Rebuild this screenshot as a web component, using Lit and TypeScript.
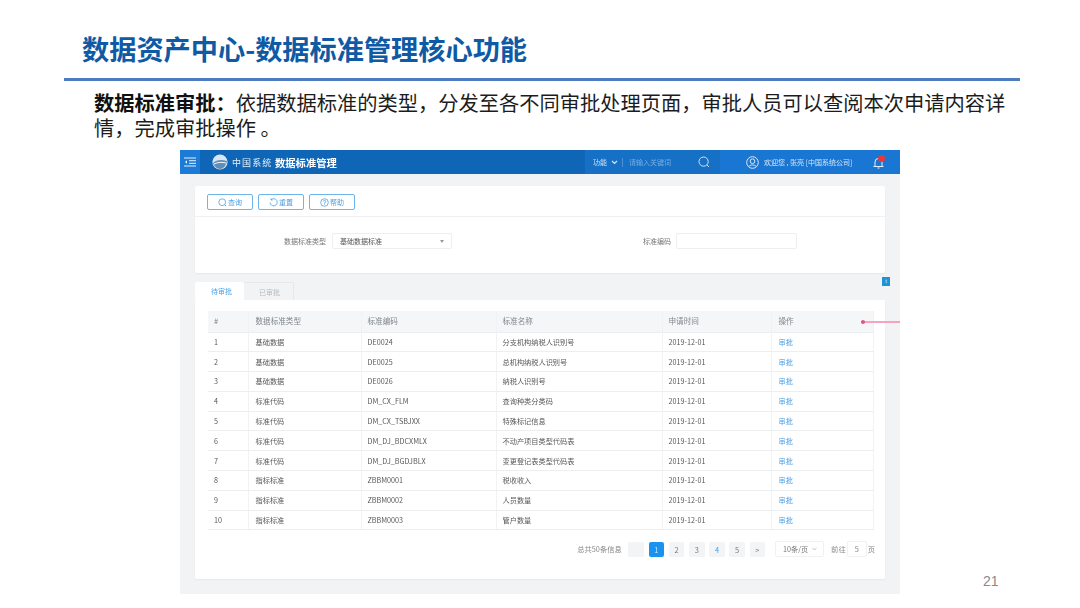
import { LitElement, html, css } from "lit";
import { customElement } from "lit/decorators.js";

const ROWS = [
  ["1", "基础数据", "DE0024", "分支机构纳税人识别号"],
  ["2", "基础数据", "DE0025", "总机构纳税人识别号"],
  ["3", "基础数据", "DE0026", "纳税人识别号"],
  ["4", "标准代码", "DM_CX_FLM", "查询种类分类码"],
  ["5", "标准代码", "DM_CX_TSBJXX", "特殊标记信息"],
  ["6", "标准代码", "DM_DJ_BDCXMLX", "不动产项目类型代码表"],
  ["7", "标准代码", "DM_DJ_BGDJBLX", "变更登记表类型代码表"],
  ["8", "指标标准", "ZBBM0001", "税收收入"],
  ["9", "指标标准", "ZBBM0002", "人员数量"],
  ["10", "指标标准", "ZBBM0003", "管户数量"],
];

@customElement("app-root")
export class AppRoot extends LitElement {
  static styles = css`
    :host {
      display: block; position: relative; width: 1080px; height: 608px; overflow: hidden;
      background: #fff; font-family: "Noto Sans CJK SC", "Liberation Sans", sans-serif;
    }
    .title { margin: 0; padding: 30px 0 0 82px; height: 48px; line-height: 36px; font-size: 27.2px; font-weight: 700; color: #0f5aa4; box-sizing: content-box; }
    .rule { margin-left: 64px; width: 956px; height: 3px; background: #4f7cc0; }
    .lead { margin: 9px 0 0 94px; width: 925px; font-size: 20.25px; line-height: 25px; color: #1c1c1c; height: 60px; }
    .lead b { font-weight: 700; color: #111; }
    .shot {
      margin: 0 0 0 180px; width: 720px; height: 444px; background: #f1f3f4; filter: blur(0.55px);
      display: flex; flex-direction: column; color: #555; font-size: 7px;
    }
    .bar { height: 24px; flex: none; display: flex; align-items: center; background: #0f66b6; color: #fff; }
    .menu { width: 20px; height: 24px; background: #1b7bd6; display: flex; align-items: center; justify-content: center; }
    .logo { margin-left: 12px; display: flex; }
    .brand { margin-left: 4px; font-size: 9px; letter-spacing: 1.1px; color: #e6f0fa; width: 42px; white-space: nowrap; }
    .app { font-size: 10.3px; font-weight: 700; margin-left: 1px; flex: 1; }
    .search { width: 135px; height: 24px; background: #1670c6; display: flex; align-items: center; color: #cfe3f6; }
    .search .fn { margin-left: 8px; font-size: 7px; }
    .search svg.chev { margin-left: 4px; }
    .search .sep { width: 1px; height: 9px; background: #4b91d6; margin: 0 6px 0 4px; }
    .search .ph { font-size: 7px; color: #77aee3; flex: 1; }
    .search .find { margin-right: 10px; display: flex; }
    .user { width: 180px; box-sizing: border-box; height: 24px; background: #1a76d3; display: flex; align-items: center; padding-left: 26px; color: #d5e6f7; }
    .user .hi { margin-left: 5px; font-size: 7px; white-space: nowrap; width: 104px; }
    .bell { margin-left: 4px; position: relative; display: flex; }
    .dot { position: absolute; top: -1px; left: 6px; width: 7px; height: 7px; border-radius: 50%; background: #e8383a; }
    .main { flex: 1; padding: 12px 15px 15px; display: flex; flex-direction: column; }
    .card { background: #fff; border-radius: 2px; box-shadow: 0 1px 2px rgba(0,0,0,.05); }
    .tools { height: 31px; box-sizing: border-box; padding: 8px 12px 0; display: flex; gap: 5px; border-bottom: 1px solid #eef0f2; }
    .btn { width: 46px; height: 16px; box-sizing: border-box; border: 1px solid #70b5ea; border-radius: 2px; color: #4e9fdf; font-size: 7px; display: flex; align-items: center; justify-content: center; gap: 1px; }
    .filters { height: 56px; display: flex; align-items: flex-start; padding-top: 16px; box-sizing: border-box; }
    .lbl { color: #777; font-size: 7px; line-height: 16px; text-align: right; }
    .lbl.a { width: 131px; }
    .lbl.b { margin-left: 119px; width: 100px; }
    .sel { width: 120px; height: 16px; box-sizing: border-box; margin-left: 6px; border: 1px solid #eceef0; border-radius: 2px; padding: 0 7px; color: #555; line-height: 14px; display: flex; justify-content: space-between; align-items: center; }
    .caret { width: 0; height: 0; border: 2.5px solid transparent; border-top: 3px solid #999; border-bottom: 0; }
    .inp { width: 121px; height: 16px; box-sizing: border-box; margin-left: 5px; border: 1px solid #eceef0; border-radius: 2px; }
    .tabs { margin-top: 9px; display: flex; height: 18px; flex: none; }
    .tab { width: 49px; box-sizing: border-box; padding-left: 16px; line-height: 18px; font-size: 7px; color: #b5bac0; }
    .tab.on { background: #fff; color: #4aa3e8; border-radius: 2px 2px 0 0; }
    .tab.off { width: 50px; padding-left: 15px; border: solid #e6e8ea; border-width: 1px 1px 0 0; }
    .panel { flex: 1; padding: 11px 10px 0 13px; display: flex; flex-direction: column; }
    table { border-collapse: collapse; table-layout: fixed; width: 665px; }
    th, td { height: 19.8px; padding: 0 0 0 6px; text-align: left; font-weight: 400; font-size: 7.2px; line-height: 1; white-space: nowrap; border-bottom: 1px solid #eceff1; border-right: 1px solid #f0f2f4; box-sizing: border-box; overflow: hidden; }
    th { height: 21px; background: #f4f6f7; color: #82878d; font-size: 7.6px; }
    td { padding-top: 1px; color: #585858; background: #fff; }
    td:first-child, th:first-child { padding-left: 6px; }
    td:nth-child(2), th:nth-child(2) { padding-left: 7px; }
    td:last-child, th:last-child { padding-left: 7px; }
    td.act { color: #4a9ee6; }
    .pager { margin-top: 11px; height: 16px; display: flex; justify-content: flex-end; align-items: center; color: #888; font-size: 7.3px; }
    .total { margin-right: 2px; }
    .pg { width: 15.5px; height: 15.5px; margin-left: 4.7px; background: #f3f4f5; border-radius: 2px; text-align: center; line-height: 15px; color: #777; font-size: 7.4px; }
    .pg.cur { background: #1a92ee; color: #cde8fc; }
    .pg.lnk { color: #4a9ee6; }
    .size { width: 49px; height: 16px; margin-left: 10px; box-sizing: border-box; border: 1px solid #f0f1f2; border-radius: 2px; padding-left: 7px; line-height: 14px; color: #777; font-size: 7.2px; display: flex; align-items: center; gap: 4px; }
    .goto { margin-left: 7px; }
    .num { width: 20px; height: 16px; margin: 0 1px; box-sizing: border-box; border: 1px solid #f0f1f2; border-radius: 2px; text-align: center; line-height: 14px; font-size: 7.4px; }
    .badge { position: absolute; left: 882px; top: 277px; width: 8px; height: 9px; background: #1c94d8; color: #d9f0fc; font-size: 6px; line-height: 9px; text-align: center; font-family: "Liberation Sans", sans-serif; }
    .pin { position: absolute; left: 861px; top: 321px; width: 39px; height: 2px; background: #f7a3bd; }
    .pin::before { content: ""; position: absolute; left: 0; top: -1px; width: 4px; height: 4px; border-radius: 50%; background: #e2557f; }
    .no { position: absolute; left: 983px; top: 571px; font-size: 14px; line-height: 20px; color: #8b8b8b; font-family: "Liberation Sans", sans-serif; }
  `;

  render() {
    return html`
      <h1 class="title">数据资产中心-数据标准管理核心功能</h1>
      <div class="rule"></div>
      <p class="lead"><b>数据标准审批\uFF1A</b>依据数据标准的类型\uFF0C分发至各不同审批处理页面\uFF0C审批人员可以查阅本次申请内容详情\uFF0C完成审批操作 \u3002</p>
      <section class="shot">
        <header class="bar">
          <div class="menu">
            <svg width="12" height="10" viewBox="0 0 12 10" fill="none" stroke="#e8f2fb" stroke-width="1"><path d="M0 1h12M5 3.7h7M5 6.3h7M0 9h12"/><path d="M3 3.2 1 5l2 1.8z" fill="#e8f2fb" stroke="none"/></svg>
          </div>
          <div class="logo">
            <svg width="16" height="16" viewBox="0 0 16 16"><circle cx="8" cy="8" r="7.6" fill="#d7e6f2"/><path d="M1 9c3-3 8-4 14-2-1 5-4 8-7 8-3 0-6-3-7-6z" fill="#5f8fb8"/><path d="M2 10c4-2 8-2 12-1" stroke="#eef5fb" stroke-width="1" fill="none"/></svg>
          </div>
          <div class="brand">中国系统</div>
          <div class="app">数据标准管理</div>
          <div class="search">
            <span class="fn">功能</span>
            <svg class="chev" width="7" height="5" viewBox="0 0 7 5" fill="none" stroke="#d5e6f7" stroke-width="1.2"><path d="M1 1l2.5 2.5L6 1"/></svg>
            <span class="sep"></span>
            <span class="ph">请输入关键词</span>
            <span class="find"><svg width="12" height="12" viewBox="0 0 12 12" fill="none" stroke="#cfe3f6"><circle cx="5.6" cy="5.6" r="4.6"/><path d="M9 9l2 2"/></svg></span>
          </div>
          <div class="user">
            <svg width="13" height="13" viewBox="0 0 13 13" fill="none" stroke="#dcebf9"><circle cx="6.5" cy="6.5" r="5.8"/><circle cx="6.5" cy="5.2" r="2.3"/><path d="M2.8 10.5c1-2 6.4-2 7.4 0"/></svg>
            <span class="hi">欢迎您 , 张亮 [中国系统公司]</span>
            <span class="bell">
              <svg width="13" height="13" viewBox="0 0 13 13" fill="none" stroke="#e6f0fa"><path d="M1.5 10.5h10M3 10.5V6a3.5 3.5 0 0 1 7 0v4.5M5.5 12h2"/></svg>
              <span class="dot"></span>
            </span>
          </div>
        </header>
        <div class="main">
          <div class="card">
            <div class="tools">
              <div class="btn"><svg width="9" height="9" viewBox="0 0 9 9" fill="none" stroke="#4e9fdf" stroke-width=".8"><circle cx="4.2" cy="4.2" r="3.4"/><path d="M6.6 6.6 8.2 8.2"/></svg>查询</div>
              <div class="btn"><svg width="9" height="9" viewBox="0 0 9 9" fill="none" stroke="#4e9fdf" stroke-width=".8"><path d="M2 1.8a3.6 3.6 0 1 1-1 2.6M2 .4v1.6h1.6"/></svg>重置</div>
              <div class="btn"><svg width="9" height="9" viewBox="0 0 9 9" fill="none" stroke="#4e9fdf" stroke-width=".8"><circle cx="4.5" cy="4.5" r="3.8"/><path d="M3.3 3.4a1.2 1.2 0 1 1 1.2 1.4v.8M4.5 6.4v.6"/></svg>帮助</div>
            </div>
            <div class="filters">
              <span class="lbl a">数据标准类型</span>
              <div class="sel"><span>基础数据标准</span><span class="caret"></span></div>
              <span class="lbl b">标准编码</span>
              <div class="inp"></div>
            </div>
          </div>
          <div class="tabs">
            <div class="tab on">待审批</div>
            <div class="tab off">已审批</div>
          </div>
          <div class="card panel">
            <table>
              <colgroup><col style="width:40px"><col style="width:113px"><col style="width:135px"><col style="width:166px"><col style="width:109px"><col style="width:102px"></colgroup>
              <thead><tr><th>#</th><th>数据标准类型</th><th>标准编码</th><th>标准名称</th><th>申请时间</th><th>操作</th></tr></thead>
              <tbody>
                ${ROWS.map((r) => html`<tr><td>${r[0]}</td><td>${r[1]}</td><td>${r[2]}</td><td>${r[3]}</td><td>2019-12-01</td><td class="act">审批</td></tr>`)}
              </tbody>
            </table>
            <div class="pager">
              <span class="total">总共50条信息</span>
              <span class="pg"></span><span class="pg cur">1</span><span class="pg">2</span><span class="pg">3</span><span class="pg lnk">4</span><span class="pg">5</span><span class="pg">&gt;</span>
              <div class="size"><span>10条/页</span><svg width="5" height="4" viewBox="0 0 5 4" fill="none" stroke="#aaa" stroke-width=".7"><path d="M.5.8 2.5 3 4.5.8"/></svg></div>
              <span class="goto">前往</span><span class="num">5</span><span>页</span>
            </div>
          </div>
        </div>
      </section>
      <div class="badge">t</div>
      <div class="pin"></div>
      <div class="no">21</div>
    `;
  }
}
